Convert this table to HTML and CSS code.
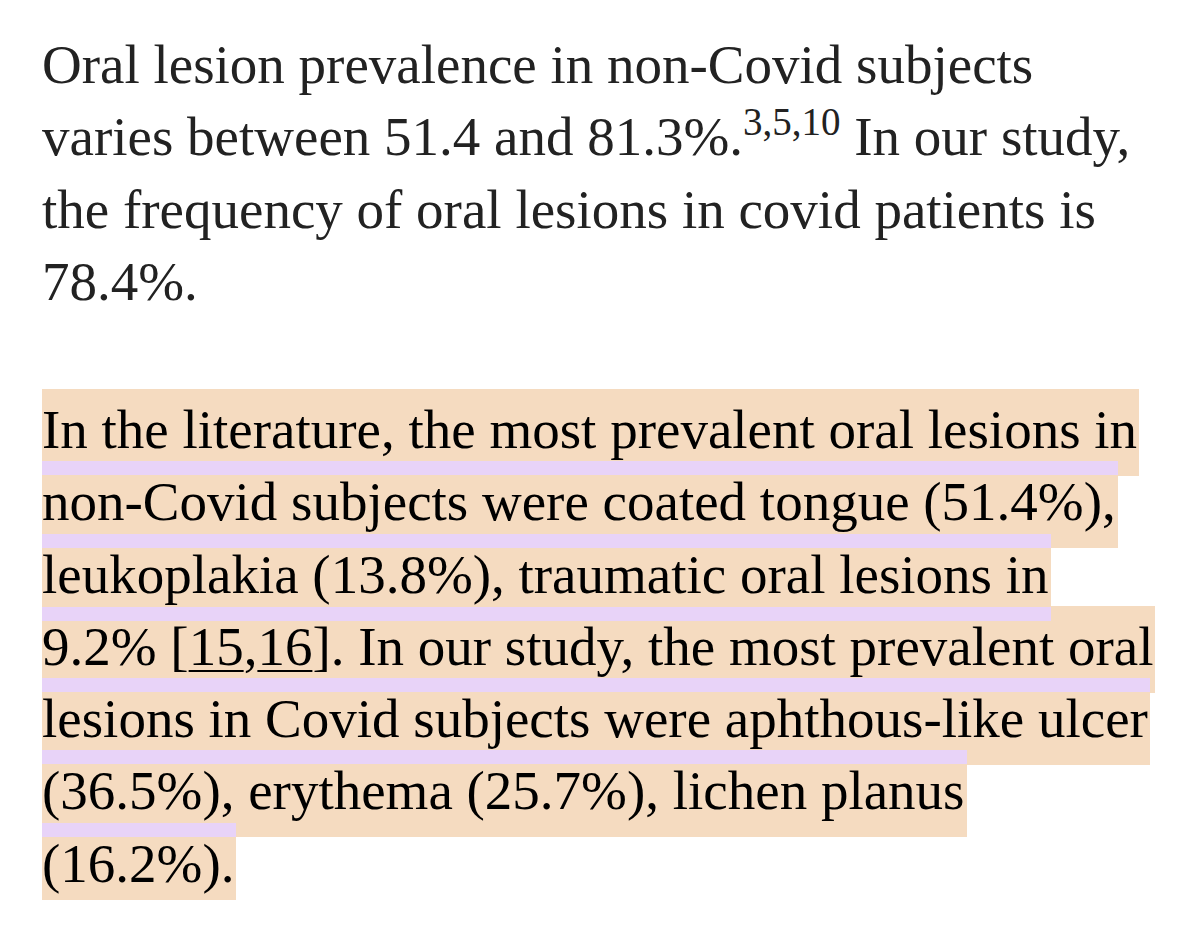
FILE: index.html
```html
<!DOCTYPE html>
<html lang="en">
<head>
<meta charset="utf-8">
<title>Oral lesions</title>
<link rel="stylesheet" href="styles.css">
</head>
<body>
<main class="page">
  <p class="intro">
    <span class="line">Oral lesion prevalence in non-Covid subjects</span>
    <span class="line">varies between 51.4 and 81.3%.<sup class="ref">3,5,10</sup> In our study,</span>
    <span class="line">the frequency of oral lesions in covid patients is</span>
    <span class="line">78.4%.</span>
  </p>
  <p class="marked">
    <span class="hl-line"><span class="hl">In the literature, the most prevalent oral lesions in</span></span>
    <span class="hl-line"><span class="hl hl--top">non-Covid subjects were coated tongue (51.4%),</span></span>
    <span class="hl-line"><span class="hl hl--top hl--bottom">leukoplakia (13.8%), traumatic oral lesions in</span></span>
    <span class="hl-line"><span class="hl">9.2% [<a class="cite" href="#r15">15</a>,<a class="cite" href="#r16">16</a>]. In our study, the most prevalent oral</span></span>
    <span class="hl-line"><span class="hl hl--top">lesions in Covid subjects were aphthous-like ulcer</span></span>
    <span class="hl-line"><span class="hl hl--top">(36.5%), erythema (25.7%), lichen planus</span></span>
    <span class="hl-line"><span class="hl hl--top">(16.2%).</span></span>
  </p>
</main>
</body>
</html>
```
FILE: styles.css
```css
html, body {
  margin: 0;
  padding: 0;
  background: #ffffff;
}

.page {
  padding: 29px 0 0 42px;
  font-family: "Liberation Serif", "Times New Roman", serif;
  font-size: 55px;
  line-height: 72.25px;
}

.intro {
  margin: 0 0 76px;
  color: #222222;
}

.line {
  display: block;
  white-space: nowrap;
}

.ref {
  font-size: 39px;
  line-height: 0;
  vertical-align: 20px;
}

.marked {
  margin: 0;
  color: #000000;
}

.hl-line {
  display: block;
  white-space: nowrap;
}

.hl {
  position: relative;
  padding: 10px 2px 16px 0;
  background: #f5dbc0;
}

.hl--top {
  background: linear-gradient(#e8d3f8 0 14px, #f5dbc0 14px 100%);
}

.hl--top.hl--bottom {
  z-index: 1;
  background: linear-gradient(#e8d3f8 0 14px, #f5dbc0 14px calc(100% - 14px), #e8d3f8 calc(100% - 14px) 100%);
}

.cite {
  color: #000000;
  text-decoration: underline;
  text-decoration-thickness: 2px;
  text-underline-offset: 5px;
}
```
